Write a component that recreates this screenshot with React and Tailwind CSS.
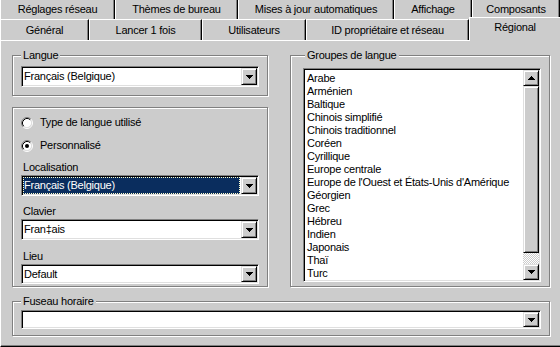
import React from "react";

// classic 3D edges
const sunken =
  "border border-t-[#808080] border-l-[#808080] border-r-white border-b-white shadow-[inset_1px_1px_0_#000,inset_-1px_-1px_0_#dfdfdf] p-px";
const raised =
  "border border-t-[#dfdfdf] border-l-[#dfdfdf] border-r-black border-b-black shadow-[inset_1px_1px_0_#fff,inset_-1px_-1px_0_#808080] bg-[#cccccc]";
const etched =
  "relative border border-[#808080] shadow-[inset_1px_1px_0_#fff,1px_1px_0_#fff]";

const row1 = [
  { label: "Réglages réseau", w: "w-[115px]" },
  { label: "Thèmes de bureau", w: "w-[123px]" },
  { label: "Mises à jour automatiques", w: "w-[156px]" },
  { label: "Affichage", w: "w-[78px]" },
  { label: "Composants", w: "w-[88px]" },
];

const row2 = [
  { label: "Général", w: "w-[89px]" },
  { label: "Lancer 1 fois", w: "w-[113px]" },
  { label: "Utilisateurs", w: "w-[104px]" },
  { label: "ID propriétaire et réseau", w: "w-[163px]" },
];

const groupes = [
  "Arabe",
  "Arménien",
  "Baltique",
  "Chinois simplifié",
  "Chinois traditionnel",
  "Coréen",
  "Cyrillique",
  "Europe centrale",
  "Europe de l'Ouest et États-Unis d'Amérique",
  "Géorgien",
  "Grec",
  "Hébreu",
  "Indien",
  "Japonais",
  "Thaï",
  "Turc",
];

const ArrowDown = () => (
  <svg width="7" height="4" viewBox="0 0 7 4" shapeRendering="crispEdges">
    <path d="M0 0h7v1H0zM1 1h5v1H1zM2 2h3v1H2zM3 3h1v1H3z" fill="#000" />
  </svg>
);

const ArrowUp = () => (
  <svg width="7" height="4" viewBox="0 0 7 4" shapeRendering="crispEdges">
    <path d="M3 0h1v1H3zM2 1h3v1H2zM1 2h5v1H1zM0 3h7v1H0z" fill="#000" />
  </svg>
);

const Radio = ({ checked }) => (
  <svg width="12" height="12" viewBox="0 0 12 12" className="shrink-0">
    <circle cx="6" cy="6" r="4.5" fill="#fff" />
    <path d="M2.11 9.89A5.5 5.5 0 0 1 9.89 2.11" stroke="#808080" fill="none" />
    <path d="M9.89 2.11A5.5 5.5 0 0 1 2.11 9.89" stroke="#fff" fill="none" />
    <path d="M2.82 9.18A4.5 4.5 0 0 1 9.18 2.82" stroke="#000" fill="none" />
    <path d="M9.18 2.82A4.5 4.5 0 0 1 2.82 9.18" stroke="#dfdfdf" fill="none" />
    {checked && <circle cx="6" cy="6" r="2" fill="#000" />}
  </svg>
);

const Label = ({ children, className = "left-[8px]" }) => (
  <span className={`absolute -top-[7px] ${className} px-[2px] bg-[#cccccc]`}>
    {children}
  </span>
);

const Combo = ({ value, selected, className = "" }) => (
  <div className={`flex bg-white ${sunken} ${className}`}>
    {selected ? (
      <div className="flex-1 min-w-0 mr-px flex items-center bg-[#0a2d5e] text-white outline outline-1 outline-dotted outline-[#ffffcc] -outline-offset-1 pl-[1px]">
        {value}
      </div>
    ) : (
      <div className="flex-1 min-w-0 flex items-center pl-[1px]">{value}</div>
    )}
    <div className={`w-4 flex items-center justify-center ${raised}`}>
      <ArrowDown />
    </div>
  </div>
);

const RadioRow = ({ label, checked, className = "" }) => (
  <div className={`flex items-center h-[13px] ${className}`}>
    <Radio checked={checked} />
    <span className="ml-[7px]">{label}</span>
  </div>
);

const Tab = ({ label, w, top }) => (
  <div
    className={`${w} shrink-0 flex items-center justify-center border-l border-l-white border-r border-r-black shadow-[inset_-1px_0_0_#808080] ${
      top ? "h-[19px]" : "h-[21px] border-t border-t-white"
    }`}
  >
    {label}
  </div>
);

export default function App() {
  return (
    <div className="w-[560px] h-[347px] overflow-hidden bg-[#cccccc] text-black text-[11px] leading-[13px] tracking-[-0.24px] font-['Liberation_Sans',Arial,sans-serif]">
      {/* Tabs */}
      <div className="flex">
        {row1.map((t) => (
          <Tab key={t.label} {...t} top />
        ))}
      </div>
      <div className="flex items-start h-[21px]">
        {row2.map((t) => (
          <Tab key={t.label} {...t} />
        ))}
        <div className="relative z-10 -mt-[2px] w-[91px] h-[24px] shrink-0 border-t border-l border-white bg-[#cccccc] flex justify-center pt-[3px]">
          Régional
        </div>
      </div>

      {/* Panel */}
      <div className="h-[307px] border-t border-l border-b border-t-white border-l-white border-b-black shadow-[inset_0_-1px_0_#808080] pt-[14px] pl-[11px]">
        <div className="flex items-start">
          <div className="w-[256px] flex flex-col">
            <div className={`${etched} h-[41px] pt-[10px] pl-[8px]`}>
              <Label>Langue</Label>
              <Combo className="w-[238px] h-[21px]" value="Français (Belgique)" />
            </div>

            <div className={`${etched} mt-[11px] h-[180px] pt-[8px] pl-[8px]`}>
              <RadioRow label="Type de langue utilisé" />
              <RadioRow checked label="Personnalisé" className="mt-[10px]" />
              <div className="mt-[9px] pl-[2px]">Localisation</div>
              <Combo
                className="mt-px w-[238px] h-[21px]"
                value="Français (Belgique)"
                selected
              />
              <div className="mt-[9px] pl-[2px]">Clavier</div>
              <Combo className="mt-px w-[238px] h-[21px]" value="Fran‡ais" />
              <div className="mt-[10px] pl-[2px]">Lieu</div>
              <Combo className="mt-px w-[238px] h-[20px]" value="Default" />
            </div>
          </div>

          <div className={`${etched} ml-[22px] w-[260px] h-[232px] pt-[12px] pl-[12px]`}>
            <Label className="left-[14px]">Groupes de langue</Label>
            <div className={`flex bg-white w-[238px] h-[214px] ${sunken}`}>
              <div className="flex-1 min-w-0 overflow-hidden pt-[2px] pl-[2px]">
                {groupes.map((g) => (
                  <div key={g} className="whitespace-nowrap">
                    {g}
                  </div>
                ))}
              </div>
              {/* Scrollbar */}
              <div className="w-4 flex flex-col bg-[image:repeating-conic-gradient(#ffffff_0_25%,#cccccc_0_50%)] bg-[length:2px_2px]">
                <div className={`h-4 flex items-center justify-center ${raised}`}>
                  <ArrowUp />
                </div>
                <div className={`h-[167px] ${raised}`} />
                <div className="flex-1" />
                <div className={`h-4 flex items-center justify-center ${raised}`}>
                  <ArrowDown />
                </div>
              </div>
            </div>
          </div>
        </div>

        <div className={`${etched} mt-[14px] w-[538px] h-[35px] pt-[8px] pl-[8px]`}>
          <Label>Fuseau horaire</Label>
          <Combo className="w-[520px] h-[19px]" value="" />
        </div>
      </div>
    </div>
  );
}
